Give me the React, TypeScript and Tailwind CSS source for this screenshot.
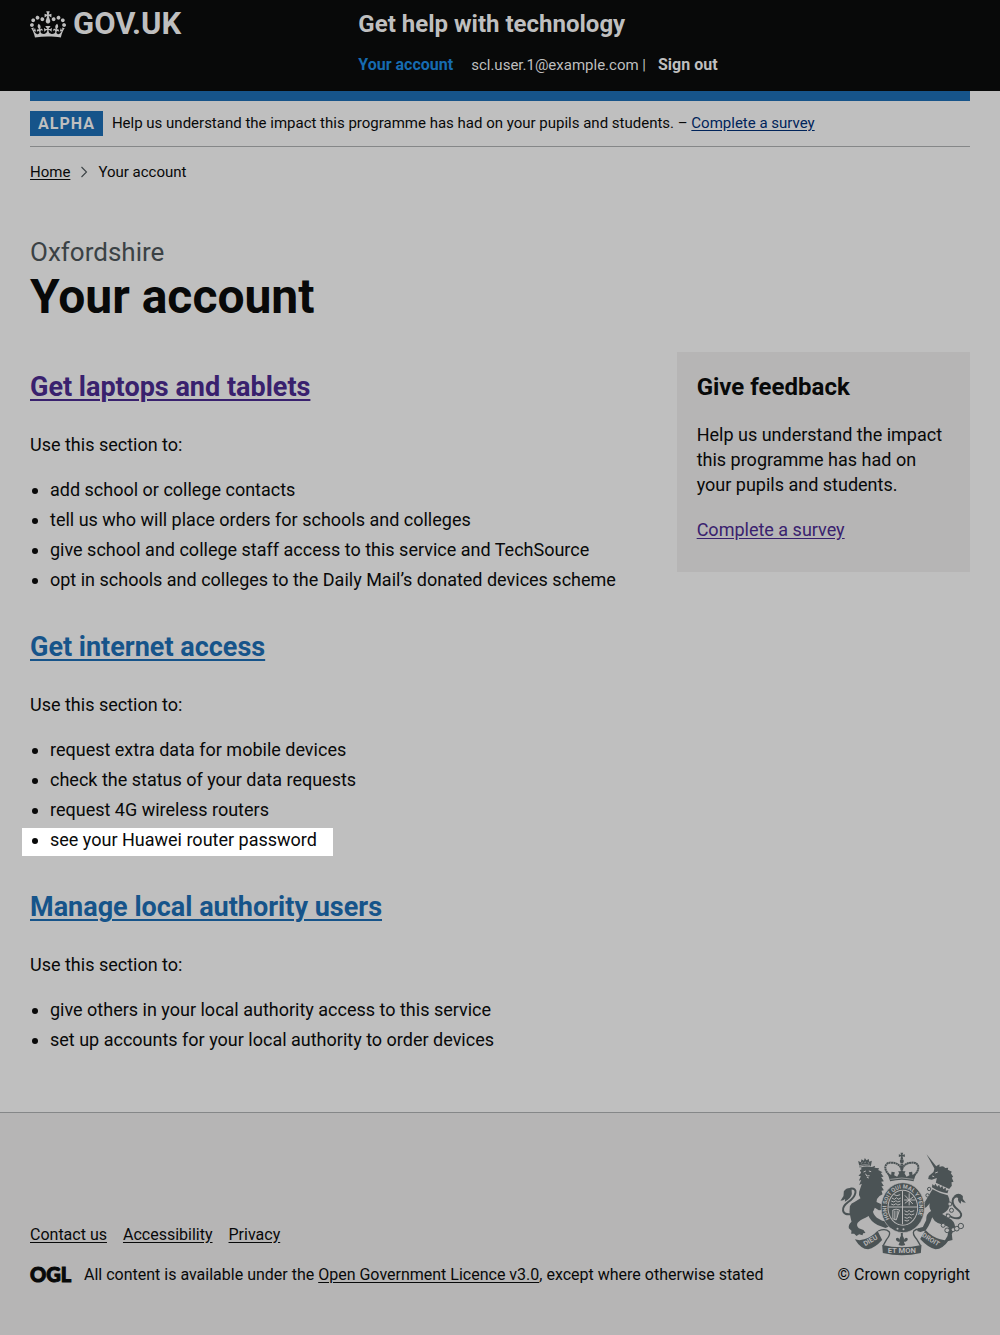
import type { ReactNode } from "react";

const CROWN_PATH =
  "M25 30.2c3.5 1.5 7.7-.2 9.1-3.7 1.5-3.6-.2-7.8-3.9-9.2-3.6-1.4-7.6.3-9.1 3.9-1.4 3.5.3 7.5 3.9 9zM9 39.5c3.6 1.5 7.8-.2 9.2-3.7 1.5-3.6-.2-7.8-3.9-9.1-3.6-1.5-7.6.2-9.1 3.8-1.4 3.5.3 7.5 3.8 9zM4.4 57.2c3.5 1.5 7.7-.2 9.1-3.8 1.5-3.6-.2-7.7-3.9-9.1-3.5-1.5-7.6.3-9.1 3.8-1.4 3.5.3 7.6 3.9 9.1zm38.3-21.4c3.5 1.5 7.7-.2 9.1-3.8 1.5-3.6-.2-7.7-3.9-9.1-3.6-1.5-7.6.3-9.1 3.8-1.3 3.6.4 7.7 3.9 9.1zm64.4-5.6c-3.6 1.5-7.8-.2-9.1-3.7-1.5-3.6.2-7.8 3.8-9.2 3.6-1.4 7.7.3 9.2 3.9 1.3 3.5-.4 7.5-3.9 9zm15.9 9.3c-3.6 1.5-7.7-.2-9.1-3.7-1.5-3.6.2-7.8 3.7-9.1 3.6-1.5 7.7.2 9.2 3.8 1.5 3.5-.3 7.5-3.8 9zm4.7 17.7c-3.6 1.5-7.8-.2-9.2-3.8-1.5-3.6.2-7.7 3.9-9.1 3.6-1.5 7.7.3 9.2 3.8 1.3 3.5-.4 7.6-3.9 9.1zM89.3 35.8c-3.6 1.5-7.8-.2-9.2-3.8-1.4-3.6.2-7.7 3.9-9.1 3.6-1.5 7.7.3 9.2 3.8 1.4 3.6-.3 7.7-3.9 9.1zM69.7 17.7l8.9 4.7V9.3l-8.9 2.8c-.2-.3-.5-.6-.9-.9L72.4 0H59.6l3.5 11.2c-.3.3-.6.5-.9.9l-8.8-2.8v13.1l8.8-4.7c.3.3.6.7.9.9l-5 15.4v.1c-.2.8-.4 1.6-.4 2.4 0 4.1 3.1 7.5 7 8.1h.2c.3 0 .7.1 1 .1.4 0 .7 0 1-.1h.2c4-.6 7.1-4.1 7.1-8.1 0-.8-.1-1.7-.4-2.4V34l-5.1-15.4c.4-.2.7-.6 1-.9zM66 92.8c16.9 0 32.8 1.1 47.1 3.2 4-16.9 8.9-26.7 14-33.5l-9.6-3.4c1 4.9 1.1 7.2 0 10.2-1.5-1.4-3-4.3-4.2-8.7L108.6 76c2.8-2 5-3.2 7.5-3.3-4.4 9.4-10 11.9-13.6 11.2-4.3-.8-6.3-4.6-5.6-7.9 1-4.7 5.7-5.9 8-.5 4.3-8.7-3-11.4-7.6-8.8 7.1-7.2 7.9-13.5 2.1-21.1-8 6.1-8.1 12.3-4.5 20.8-4.7-5.4-12.1-2.5-9.5 6.2 3.4-5.2 7.9-2 7.2 3.1-.6 4.3-6.4 7.8-13.5 7.2-10.3-.9-10.9-8-11.2-13.8 2.5-.5 7.1 1.8 11 7.3L80.2 60c-4.1 4.4-8 5.3-12.3 5.4 1.4-4.4 8-11.6 8-11.6H55.5s6.4 7.2 7.9 11.6c-4.2-.1-8-1-12.3-5.4l1.4 16.4c3.9-5.5 8.5-7.7 10.9-7.3-.3 5.8-.9 12.8-11.1 13.8-7.2.6-12.9-2.9-13.5-7.2-.7-5 3.8-8.3 7.1-3.1 2.7-8.7-4.6-11.6-9.4-6.2 3.7-8.5 3.6-14.7-4.6-20.8-5.8 7.6-5 13.9 2.2 21.1-4.7-2.6-11.9.1-7.7 8.8 2.3-5.5 7.1-4.2 8.1.5.7 3.3-1.3 7.1-5.7 7.9-3.5.7-9-1.8-13.5-11.2 2.5.1 4.7 1.3 7.5 3.3l-4.7-15.4c-1.2 4.4-2.7 7.2-4.3 8.7-1.1-3-.9-5.3 0-10.2l-9.5 3.4c5 6.9 9.9 16.7 14 33.5 14.8-2.1 30.8-3.2 47.7-3.2z";

function Crown() {
  return (
    <svg viewBox="0 0 132 97" className="h-[27px] w-9" fill="currentColor" aria-hidden="true">
      <path d={CROWN_PATH} />
    </svg>
  );
}

function Crest() {
  const ink = "#4b5355";
  const paper = "#b6b5b5";
  return (
    <svg
      viewBox="64 36 380 312"
      className="h-[104px] w-[127px]"
      fill={ink}
      fontFamily="Roboto, sans-serif"
      fontWeight="700"
      role="img"
      aria-label="Royal coat of arms"
    >
      {/* crown */}
      <path d="M245 38h8l-2 7 7-2v8l-7-2 2 8h-8l2-8-7 2v-8l7 2z" />
      <circle cx="249" cy="63" r="6" />
      <path
        d="M215 108C190 88 198 66 218 68c16 0 26 8 31 20 5-12 15-20 31-20 20-2 28 20 3 40"
        fill="none"
        stroke={ink}
        strokeWidth="6"
        strokeDasharray="6 1"
      />
      <path d="M249 64v40" stroke={ink} strokeWidth="8" strokeDasharray="6 1" />
      <path d="M214 124l-8-24 11 5 1-10 10 2-2 9 9 4 6-10-3-6h22l-3 6 6 10 9-4-2-9 10-2 1 10 11-5-8 24q-35-9-70 0z" />
      <path d="M214 118q35-8 70 0" fill="none" stroke={paper} strokeWidth="2" />

      {/* lion */}
      <path d="M122 80l-4-17 8 4 2-9 7 4 3-8 5 7 7-4 1 8 8-3-3 17q-16-4-34 1z" />
      <path
        d="M121 77q16-5 33-1M127 70l4-3M137 68l4-2M147 68l4 2"
        fill="none"
        stroke={paper}
        strokeWidth="2"
      />
      <path d="M122 84q18-7 37-3l10-4-2 6 14 2-3 5 13 7-5 2 8 11-7 1 8 13-8 1 8 13-7 1 7 12-7 1 3 11-9 5q-8 6-9 18l13 6 13-5 10 7-8 4 5 6-8 2-1 8-9-4-8 1-12-8q-6 20-28 30-18 7-24 16-4 9 4 16l14 5 6 9-7 1-2 6-10-3-8 5-7-7-9 0 1-9-8-7q-2-12 8-20l-3-13q-5-15-2-33 4-10 14-13l18-11q-7-10-4-20l8-24-8 4 6-15-7 2 6-13-7-2 8-9-4-7 6-4-6-5 2-6z" />
      <path d="M160 206q2 16 14 27l16 9 22 5-3-10 10 7 5 13-7 0 0 8-8-5-9 4-24-9q-22-12-28-30z" />
      <path d="M134 96l7-3M150 93l7 2M140 101l4 7 8-1M144 112l6 2" fill="none" stroke={paper} strokeWidth="3" />
      <path
        d="M98 222C66 228 66 202 88 186 112 170 120 142 94 146"
        fill="none"
        stroke={ink}
        strokeWidth="6"
      />
      <path d="M98 144q-16-2-23 10l-1 14-9 14q9 0 14-5l-1 8q18-9 21-23z" />

      {/* unicorn */}
      <path d="M323 43l31 38-7 5z" />
      <path d="M347 85l7-8 8-4v8q12-5 17 3l9-1-1 6 12 6-3 5 7 10-4 3 5 12-6 2 1 10-8 10-40-19 3-14-15 5-11-2 2-9 14-12z" />
      <path d="M341 148q24 14 46 18l4 10q4 22-5 34-7 8-16 12l20 12q17 8 19 27l-10 22 2 17-12 3-12 0 9-15 2-12q6-12-3-17l-28-10q-12-6-17-17-5 16-11 26l-8 13-16 5-10-3 3-8 14-4 10-20q-1-20 15-28-8-12-4-23-8 12-20 17l-5 7-7-3-3-9 13-3 9-12-18-7-7-11-12-1-3 7 9 13 5 20 9 6 8-7-7-7-3-12 14 3z" />
      <path d="M341 132l5 5 4-6 5 9 6-6 3 9 7-5 2 9 8-4 0 9 8-2-3 10q-24-3-47-18z" />
      <path d="M349 99l8-3M340 108l6 2" stroke={paper} strokeWidth="3" />
      <path
        d="M382 222C425 250 438 225 418 210 394 192 397 168 420 168"
        fill="none"
        stroke={ink}
        strokeWidth="6"
      />
      <path d="M405 168q14-13 27 0l0 9 9 11q-10 0-14-6l-1 9q-11-7-8-17z" />
      <g fill={paper} stroke={ink} strokeWidth="3">
        <circle cx="331" cy="147" r="5" />
        <circle cx="326" cy="166" r="5" />
        <circle cx="393" cy="192" r="6" />
        <circle cx="398" cy="211" r="6" />
        <circle cx="388" cy="228" r="6" />
        <circle cx="373" cy="256" r="6" />
        <circle cx="385" cy="271" r="7" />
        <circle cx="403" cy="269" r="6" />
        <circle cx="414" cy="266" r="7" />
        <circle cx="426" cy="258" r="8" />
      </g>

      {/* garter and shield */}
      <ellipse cx="252" cy="203" rx="65" ry="75" stroke={paper} strokeWidth="2" />
      <ellipse cx="252" cy="203" rx="46" ry="54" fill={paper} />
      <path id="garter" d="M212 237A49 58 0 1 1 292 237" fill="none" />
      <text fontSize="17" fill={paper}>
        <textPath href="#garter">HONI SOIT QUI MAL Y PENSE</textPath>
      </text>
      <g fill={paper}>
        <circle cx="236" cy="266" r="3" />
        <circle cx="254" cy="268" r="3" />
      </g>
      <ellipse cx="252" cy="203" rx="43" ry="51" />
      <path d="M251 153v100M209 201h86" stroke={paper} strokeWidth="3" />
      <g fill="none" stroke={paper} strokeWidth="3">
        <path d="M219 174l8 4 6-5 5 5 8-4M217 183l8 3 6-4 6 4 8-3M217 192l8 3 6-4 6 4 8-3M226 164l8 3 10-3" />
        <path d="M258 166l24 26M284 170l-26 20M271 160v36M256 180h34" />
        <path d="M222 236V210q10-5 20 0l-10 30zM228 212v28M235 212v20" />
        <path d="M257 212l8 4 6-5 5 5 10-4M257 222l8 3 6-4 6 4 9-3M257 232l8 3 6-4 8 4M257 241l8 2 6-3" />
      </g>

      {/* fleur-de-lis */}
      <path d="M246 279h6v9q6 9 2 14 5-13 12-7 3 7-6 10h-5l4 10q-10 5-20 0l4-10h-5q-9-3-6-10 7-6 12 7-4-5 2-14z" />

      {/* motto ribbons */}
      <path d="M108 298q14 5 28 0 24-8 40-26l14 28q-22 24-42 28-22 0-40-30z" />
      <path d="M392 298q-14 5-28 0-26-8-44-28l-16 27q24 26 46 31 22 0 42-30z" />
      <path
        d="M178 273q22-9 33 2 5 9-8 24l-10 18M318 271q-22-9-33 2-5 9 8 24l12 20"
        fill="none"
        stroke={ink}
        strokeWidth="4"
      />
      <path d="M190 315q59 14 118 0l-2 24q-57 14-114 0z" />
      <text transform="translate(139 319) rotate(-31)" fontSize="21" fill={paper}>
        DIEU
      </text>
      <text transform="translate(308 289) rotate(32)" fontSize="20" fill={paper}>
        DROIT
      </text>
      <text x="249" y="340" fontSize="23" fill={paper} textAnchor="middle">
        ET MON
      </text>
    </svg>
  );
}

type SectionProps = { title: string; visited?: boolean; items: string[]; highlighted?: string };

function Section({ title, visited, items, highlighted }: SectionProps) {
  return (
    <section className="mb-5 pt-5">
      <h2 className="mb-[30px] text-[27px] leading-[30px] font-bold">
        <a
          href="#"
          className={
            visited
              ? "text-[#39216e] underline decoration-2 underline-offset-3"
              : "text-[#16548a] underline decoration-2 underline-offset-3"
          }
        >
          {title}
        </a>
      </h2>
      <p className="mb-5">Use this section to:</p>
      <ul className="flex list-disc flex-col items-start gap-[5px] pl-5">
        {items.map((item) => (
          <li
            key={item}
            className={
              item === highlighted
                ? "relative z-0 before:absolute before:top-px before:-right-4 before:-left-7 before:-z-10 before:h-7 before:bg-white"
                : undefined
            }
          >
            {item}
          </li>
        ))}
      </ul>
    </section>
  );
}

function TextLink({ children }: { children: ReactNode }) {
  return (
    <a href="#" className="underline underline-offset-2">
      {children}
    </a>
  );
}

export default function App() {
  return (
    <div className="flex min-h-screen flex-col bg-[#bfbfbf] font-['Roboto',sans-serif] text-lg leading-[25px] text-[#080909]">
      <header className="bg-[#080909] px-[30px] text-[#bfbfbf]">
        <div className="flex h-[91px] pt-[9px]">
          <div className="w-1/3 pt-px">
            <a href="#" className="flex items-center gap-[7px]">
              <Crown />
              <span className="text-[31px] leading-7 font-bold">GOV.UK</span>
            </a>
          </div>
          <div className="pl-[15px]">
            <a href="#" className="block text-2xl leading-[30px] font-bold">
              Get help with technology
            </a>
            <nav className="mt-4 flex text-base leading-5 font-bold">
              <a href="#" className="mr-[18px] text-[#166bb0]">
                Your account
              </a>
              <span className="mr-3 text-[15px] font-normal">scl.user.1@example.com |</span>
              <a href="#">Sign out</a>
            </nav>
          </div>
        </div>
      </header>

      <div className="mx-[30px] border-t-10 border-[#16548a]">
        <div className="flex items-center gap-[9px] border-b border-[#858788] py-2.5 text-[15px] leading-[25px]">
          <strong className="bg-[#16548a] px-2 text-base leading-[25px] tracking-[1px] text-[#bfbfbf]">ALPHA</strong>
          <p>
            Help us understand the impact this programme has had on your pupils and students. –{" "}
            <a href="#" className="text-[#00245a] underline underline-offset-2">
              Complete a survey
            </a>
          </p>
        </div>
        <nav aria-label="Breadcrumb" className="mt-[15px]">
          <ol className="flex items-center text-[15px] leading-5">
            <li>
              <TextLink>Home</TextLink>
            </li>
            <li className="flex items-center">
              <svg viewBox="0 0 8 12" className="mx-2.5 h-3 w-2" aria-hidden="true">
                <path d="M1.5 1l5 5-5 5" fill="none" stroke="#3b4245" strokeWidth="1.1" />
              </svg>
              Your account
            </li>
          </ol>
        </nav>
      </div>

      <main className="mx-[30px] mt-[55px] mb-10">
        <p className="text-[26px] leading-[30px] text-[#3b4245]">Oxfordshire</p>
        <h1 className="mt-[5px] mb-[30px] text-5xl leading-[50px] font-bold">Your account</h1>
        <div className="grid grid-cols-3 items-start gap-[30px]">
          <div className="col-span-2">
            <Section
              title="Get laptops and tablets"
              visited
              items={[
                "add school or college contacts",
                "tell us who will place orders for schools and colleges",
                "give school and college staff access to this service and TechSource",
                "opt in schools and colleges to the Daily Mail’s donated devices scheme",
              ]}
            />
            <Section
              title="Get internet access"
              highlighted="see your Huawei router password"
              items={[
                "request extra data for mobile devices",
                "check the status of your data requests",
                "request 4G wireless routers",
                "see your Huawei router password",
              ]}
            />
            <Section
              title="Manage local authority users"
              items={[
                "give others in your local authority access to this service",
                "set up accounts for your local authority to order devices",
              ]}
            />
          </div>
          <aside className="bg-[#b6b5b5] p-5 pb-[30px]">
            <h2 className="mb-5 text-2xl leading-[30px] font-bold">Give feedback</h2>
            <p className="mb-5">Help us understand the impact this programme has had on your pupils and students.</p>
            <p>
              <a href="#" className="text-[#39216e] underline underline-offset-2">
                Complete a survey
              </a>
            </p>
          </aside>
        </div>
      </main>

      <footer className="flex grow items-start border-t border-[#858788] bg-[#b6b5b5] px-[30px] pt-[39px] pb-[50px] text-base leading-5">
        <div className="flex w-full items-end justify-between">
          <div>
            <ul className="mb-5 flex gap-4">
              {["Contact us", "Accessibility", "Privacy"].map((label) => (
                <li key={label}>
                  <TextLink>{label}</TextLink>
                </li>
              ))}
            </ul>
            <div className="flex items-start">
              <span
                className="w-[54px] shrink-0 font-['Lato',sans-serif] text-xl leading-[18px] font-black [-webkit-text-stroke:1px_#080909]"
                title="Open Government Licence"
              >
                OGL
              </span>
              <p>
                All content is available under the <TextLink>Open Government Licence v3.0</TextLink>, except where
                otherwise stated
              </p>
            </div>
          </div>
          <div className="flex flex-col items-center gap-[9px]">
            <Crest />
            <a href="#">© Crown copyright</a>
          </div>
        </div>
      </footer>
    </div>
  );
}
